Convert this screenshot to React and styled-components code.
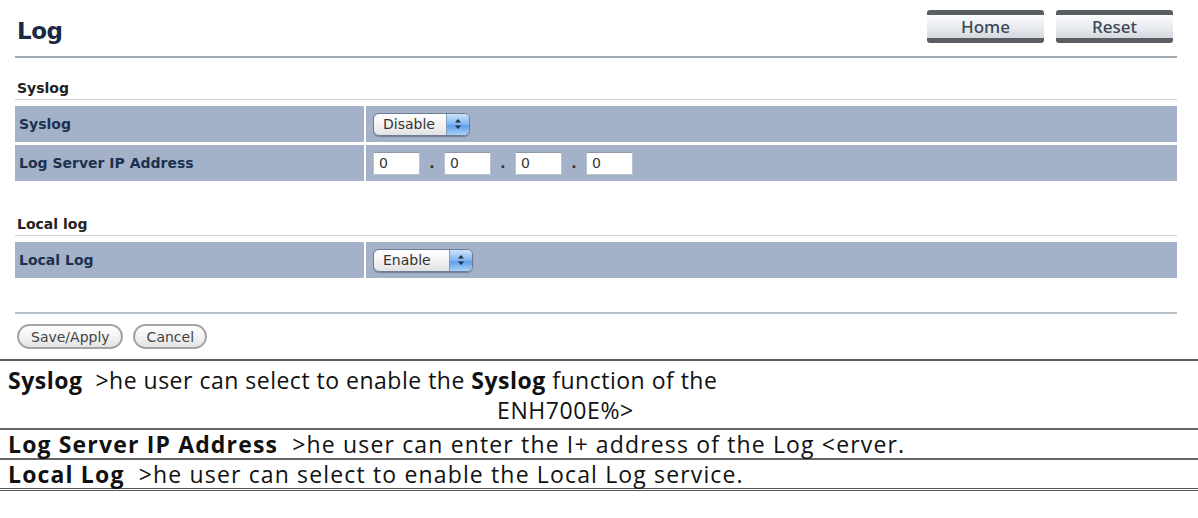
import React from 'react'
import styled, { createGlobalStyle } from 'styled-components'

const GlobalStyle = createGlobalStyle`
  html, body {
    margin: 0;
    padding: 0;
    background: #ffffff;
  }
  body {
    width: 1198px;
    height: 518px;
    overflow: hidden;
  }
`

const syslogRows = [
  { label: 'Syslog', kind: 'select', value: 'Disable' },
  { label: 'Log Server IP Address', kind: 'ip', value: ['0', '0', '0', '0'] },
]

const localRows = [{ label: 'Local Log', kind: 'select', value: 'Enable' }]

function SelectBox({ value, width }) {
  return (
    <Select $width={width}>
      <span className="text">{value}</span>
      <span className="arrow">
        <svg width="8" height="12" viewBox="0 0 8 12">
          <path d="M4 1 L7 4.5 L1 4.5 Z" fill="#1f2f4a" />
          <path d="M4 11 L7 7.5 L1 7.5 Z" fill="#1f2f4a" />
        </svg>
      </span>
    </Select>
  )
}

function Row({ row }) {
  return (
    <RowWrap>
      <Label>{row.label}</Label>
      <Value>
        {row.kind === 'select' && <SelectBox value={row.value} width={row.value === 'Enable' ? 100 : 97} />}
        {row.kind === 'ip' && (
          <IpGroup>
            {row.value.map((v, i) => (
              <React.Fragment key={i}>
                {i > 0 && <Dot>.</Dot>}
                <IpInput>{v}</IpInput>
              </React.Fragment>
            ))}
          </IpGroup>
        )}
      </Value>
    </RowWrap>
  )
}

export default function App() {
  return (
    <>
      <GlobalStyle />
      <Page>
        <Panel>
          <Header>
            <Title>Log</Title>
            <NavButtons>
              <NavButton>Home</NavButton>
              <NavButton>Reset</NavButton>
            </NavButtons>
          </Header>

          <SectionTitle>Syslog</SectionTitle>
          <Rows>
            {syslogRows.map((r) => (
              <Row key={r.label} row={r} />
            ))}
          </Rows>

          <SectionTitle $top={35}>Local log</SectionTitle>
          <Rows>
            {localRows.map((r) => (
              <Row key={r.label} row={r} />
            ))}
          </Rows>

          <Footer>
            <Pill>Save/Apply</Pill>
            <Pill>Cancel</Pill>
          </Footer>
        </Panel>

        <HelpTable>
          <HelpRow $first>
            <HelpLine $tight>
              <b>Syslog</b>&nbsp; &gt;he user can select to enable the <b>Syslog</b> function of the
            </HelpLine>
            <Centered>ENH700E%&gt;</Centered>
          </HelpRow>
          <HelpRow>
            <HelpLine>
              <b>Log Server IP Address</b>&nbsp; &gt;he user can enter the I+ address of the Log &lt;erver.
            </HelpLine>
          </HelpRow>
          <HelpRow $last>
            <HelpLine>
              <b>Local Log</b>&nbsp; &gt;he user can select to enable the Local Log service.
            </HelpLine>
          </HelpRow>
        </HelpTable>
      </Page>
    </>
  )
}

const Page = styled.div`
  display: flex;
  flex-direction: column;
  width: 1198px;
`

const Panel = styled.div`
  display: flex;
  flex-direction: column;
  margin-left: 15px;
  width: 1162px;
  font-family: "DejaVu Sans", Verdana, sans-serif;
`

const Header = styled.div`
  display: flex;
  justify-content: space-between;
  align-items: flex-start;
  height: 56px;
  border-bottom: 2px solid #a2abb4;
`

const Title = styled.h1`
  margin: 17px 0 0 2px;
  font-size: 23px;
  line-height: 28px;
  font-weight: bold;
  color: #1a2a45;
  letter-spacing: -0.5px;
`

const NavButtons = styled.div`
  display: flex;
  gap: 12px;
  margin-top: 10px;
  margin-right: 4px;
`

const NavButton = styled.div`
  width: 117px;
  height: 23px;
  box-sizing: content-box;
  display: flex;
  align-items: center;
  justify-content: center;
  border-top: 5px solid #5a5e63;
  border-bottom: 5px solid #5a5e63;
  border-radius: 3px;
  background: linear-gradient(#fbfcfd, #e6e9ed 60%, #d3d8de);
  font-family: "Noto Sans", sans-serif;
  font-size: 17px;
  font-weight: 500;
  color: #3b4853;
`

const SectionTitle = styled.div`
  margin-top: ${(p) => p.$top || 22}px;
  padding: 0 0 3px 2px;
  font-size: 14px;
  line-height: 16px;
  font-weight: bold;
  color: #222;
  border-bottom: 1px solid #cfd3d8;
`

const Rows = styled.div`
  display: flex;
  flex-direction: column;
  gap: 3px;
  margin-top: 6px;
`

const RowWrap = styled.div`
  display: grid;
  grid-template-columns: 349px 1fr;
  column-gap: 2px;
  height: 36px;
`

const Label = styled.div`
  display: flex;
  align-items: center;
  padding-left: 4px;
  background: #a3b2c8;
  font-size: 14px;
  font-weight: bold;
  color: #1c3150;
`

const Value = styled.div`
  display: flex;
  align-items: center;
  padding-left: 7px;
  background: #a3b2c8;
`

const Select = styled.div`
  display: flex;
  width: ${(p) => p.$width}px;
  height: 23px;
  box-sizing: border-box;
  border: 1px solid #6d7d96;
  border-radius: 6px;
  overflow: hidden;
  background: linear-gradient(#ffffff, #f1f1f1 55%, #e2e2e2);
  box-shadow: 0 1px 1px rgba(40, 50, 70, 0.4);
  .text {
    flex: 1;
    display: flex;
    align-items: center;
    padding-left: 9px;
    font-size: 14px;
    color: #333;
  }
  .arrow {
    width: 22px;
    display: flex;
    align-items: center;
    justify-content: center;
    background: linear-gradient(#cfe4fb, #7fb3ef 50%, #5e9ee8 55%, #a9d0f8);
    border-left: 1px solid #7f9ac0;
  }
`

const IpGroup = styled.div`
  display: flex;
  align-items: center;
`

const IpInput = styled.div`
  width: 47px;
  height: 23px;
  box-sizing: border-box;
  display: flex;
  align-items: center;
  padding-left: 5px;
  background: #fff;
  border: 1px solid #b9c3d0;
  border-top-color: #8e99a8;
  font-size: 14px;
  color: #333;
`

const Dot = styled.span`
  width: 24px;
  text-align: center;
  font-size: 14px;
  font-weight: bold;
  color: #333;
`

const Footer = styled.div`
  display: flex;
  gap: 10px;
  margin-top: 34px;
  padding: 10px 0 10px 2px;
  border-top: 2px solid #b8c0c8;
`

const Pill = styled.div`
  height: 25px;
  box-sizing: border-box;
  display: flex;
  align-items: center;
  padding: 0 11px 0 12px;
  border: 2px solid #a4a4a4;
  border-radius: 13px;
  background: linear-gradient(#ffffff, #f0f0f0 60%, #e3e3e3);
  font-size: 14px;
  color: #444;
`

const HelpTable = styled.div`
  display: flex;
  flex-direction: column;
  border-top: 2px solid #5f5f5f;
  font-family: "Open Sans", "Noto Sans", sans-serif;
  font-size: 23px;
  color: #111;
`

const HelpRow = styled.div`
  display: flex;
  flex-direction: column;
  padding: ${(p) => (p.$first ? '4px 0 3px 8px' : '0 0 0 8px')};
  line-height: ${(p) => (p.$first ? '30px' : '28px')};
  border-bottom: ${(p) => (p.$last ? '3px double #555' : '2px solid #666')};
  b {
    font-weight: bold;
  }
`

const HelpLine = styled.div`
  white-space: nowrap;
  letter-spacing: ${(p) => (p.$tight ? '0.5px' : '1.15px')};
`

const Centered = styled.div`
  padding-left: 489px;
  letter-spacing: 0.6px;
`
